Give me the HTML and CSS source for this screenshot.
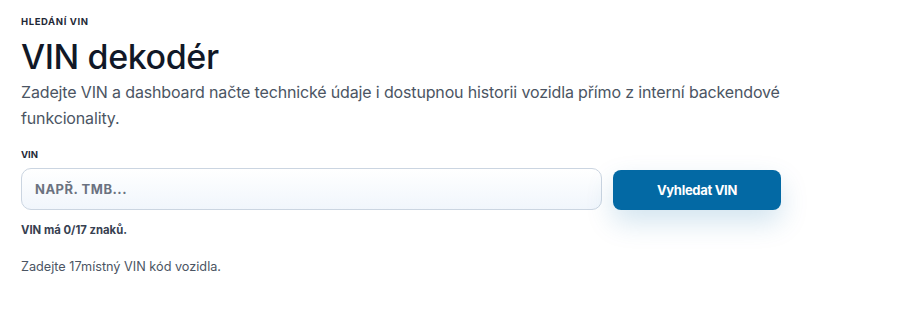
FILE: index.html
```html
<!DOCTYPE html>
<html lang="cs">
<head>
<meta charset="utf-8">
<title>VIN dekodér</title>
<link rel="stylesheet" href="styles.css">
</head>
<body>
<main class="page">
  <p class="eyebrow">HLEDÁNÍ VIN</p>
  <h1 class="title">VIN dekodér</h1>
  <p class="lead">Zadejte VIN a dashboard načte technické údaje i dostupnou historii vozidla přímo z interní backendové funkcionality.</p>
  <form class="search">
    <label class="label" for="vin">VIN</label>
    <div class="row">
      <input id="vin" class="input" type="text" placeholder="NAPŘ. TMB...">
      <button class="btn" type="button">Vyhledat VIN</button>
    </div>
  </form>
  <p class="count">VIN má 0/17 znaků.</p>
  <p class="hint">Zadejte 17místný VIN kód vozidla.</p>
</main>
</body>
</html>
```
FILE: styles.css
```css
* { box-sizing: border-box; }
html, body { margin: 0; background: #ffffff; }
body {
  font-family: Inter, "Noto Sans", sans-serif;
  color: #111827;
}
.page {
  width: 783px;
  padding: 16px 0 0 21px;
}
.eyebrow {
  margin: 0;
  font-size: 9.5px;
  font-weight: 700;
  letter-spacing: 0.6px;
  color: #1f2937;
  line-height: 12px;
}
.title {
  margin: 9px 0 0 0;
  font-size: 34px;
  font-weight: 500;
  line-height: 40px;
  letter-spacing: -0.4px;
  color: #111827;
}
.lead {
  margin: 2px 0 0 0;
  font-size: 16px;
  line-height: 26px;
  color: #4b5563;
  letter-spacing: -0.15px;
}
.search { margin-top: 18px; }
.label {
  display: block;
  font-size: 9.5px;
  font-weight: 700;
  color: #1f2937;
  line-height: 12px;
  margin-bottom: 7px;
}
.row {
  display: flex;
  gap: 11px;
  align-items: flex-start;
}
.input {
  flex: 0 0 581px;
  height: 42px;
  border: 1px solid #cbd5e1;
  border-radius: 10px;
  background: linear-gradient(180deg, #ffffff 0%, #f1f6fc 100%);
  padding: 0 13px;
  font-family: inherit;
  font-size: 13px;
  font-weight: 700;
  letter-spacing: 0.5px;
  color: #1f2937;
  outline: none;
}
.input::placeholder {
  color: #6b7280;
  opacity: 1;
}
.btn {
  margin-top: 2px;
  flex: 0 0 168px;
  height: 40px;
  border: 0;
  border-radius: 8px;
  background: #0369a4;
  color: #ffffff;
  font-family: inherit;
  font-size: 13px;
  font-weight: 700;
  letter-spacing: -0.3px;
  box-shadow: 0 12px 28px rgba(3, 105, 164, 0.18);
  cursor: pointer;
}
.count {
  margin: 12px 0 0 0;
  font-size: 11.3px;
  font-weight: 700;
  color: #374151;
  line-height: 16px;
}
.hint {
  margin: 21px 0 0 0;
  font-size: 12.7px;
  color: #4b5563;
  line-height: 16px;
}
```
